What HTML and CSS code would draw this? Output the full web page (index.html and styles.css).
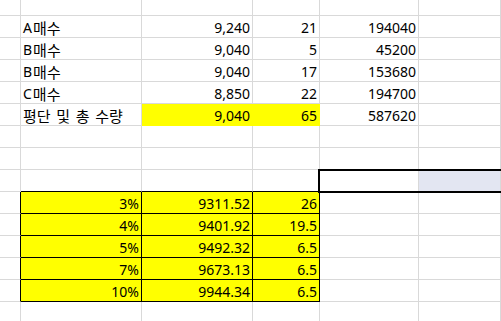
FILE: index.html
```html
<!DOCTYPE html>
<html lang="ko">
<head>
<meta charset="utf-8">
<title>Sheet</title>
<link rel="stylesheet" href="styles.css">
</head>
<body>
<div class="sheet">
  <div class="c top"></div><div class="c top"></div><div class="c top"></div><div class="c top"></div><div class="c top"></div><div class="c top"></div>

  <div class="c"></div><div class="c">A<span class="hg">매수</span></div><div class="c n">9,240</div><div class="c n">21</div><div class="c n">194040</div><div class="c"></div>
  <div class="c"></div><div class="c">B<span class="hg">매수</span></div><div class="c n">9,040</div><div class="c n">5</div><div class="c n">45200</div><div class="c"></div>
  <div class="c"></div><div class="c">B<span class="hg">매수</span></div><div class="c n">9,040</div><div class="c n">17</div><div class="c n">153680</div><div class="c"></div>
  <div class="c"></div><div class="c">C<span class="hg">매수</span></div><div class="c n">8,850</div><div class="c n">22</div><div class="c n">194700</div><div class="c"></div>
  <div class="c"></div><div class="c"><span class="hg ko">평단 및 총 수량</span></div><div class="c n hl">9,040</div><div class="c n hl">65</div><div class="c n">587620</div><div class="c"></div>

  <div class="c"></div><div class="c"></div><div class="c"></div><div class="c"></div><div class="c"></div><div class="c"></div>
  <div class="c"></div><div class="c"></div><div class="c"></div><div class="c"></div><div class="c"></div><div class="c"></div>
  <div class="c"></div><div class="c above"></div><div class="c above"></div><div class="c above"></div><div class="c active"><div class="selbox"></div></div><div class="c shade"></div>

  <div class="c edge"></div><div class="c n tb">3%</div><div class="c n tb">9311.52</div><div class="c n tb">26</div><div class="c"></div><div class="c"></div>
  <div class="c edge"></div><div class="c n tb">4%</div><div class="c n tb">9401.92</div><div class="c n tb">19.5</div><div class="c"></div><div class="c"></div>
  <div class="c edge"></div><div class="c n tb">5%</div><div class="c n tb">9492.32</div><div class="c n tb">6.5</div><div class="c"></div><div class="c"></div>
  <div class="c edge"></div><div class="c n tb">7%</div><div class="c n tb">9673.13</div><div class="c n tb">6.5</div><div class="c"></div><div class="c"></div>
  <div class="c edge"></div><div class="c n tb">10%</div><div class="c n tb">9944.34</div><div class="c n tb">6.5</div><div class="c"></div><div class="c"></div>

  <div class="c"></div><div class="c"></div><div class="c"></div><div class="c"></div><div class="c"></div><div class="c"></div>
</div>
</body>
</html>
```

FILE: styles.css
```css
html, body {
  margin: 0;
  padding: 0;
  background: #ffffff;
  overflow: hidden;
}

.sheet {
  display: grid;
  width: 501px;
  height: 321px;
  overflow: hidden;
  grid-template-columns: 21px 121px 111px 67px 99px minmax(0, 1fr);
  grid-template-rows: 16px repeat(14, 22px);
  font-family: "Noto Sans", "Noto Sans CJK KR", sans-serif;
  font-size: 14px;
  color: #000000;
}

.c {
  box-sizing: border-box;
  border-right: 1px solid #d9d9d9;
  border-bottom: 1px solid #d9d9d9;
  display: flex;
  align-items: flex-end;
  padding: 0 2px;
  line-height: 19px;
  white-space: nowrap;
  overflow: visible;
}

.n {
  justify-content: flex-end;
}

.hg {
  font-family: "Noto Sans CJK KR", sans-serif;
  font-size: 15px;
  line-height: 19px;
  margin-left: 1px;
}

.ko {
  margin-left: 0;
  word-spacing: 1.5px;
}

.hl {
  background: #ffff00;
  border-right-color: #ffff00;
  border-bottom-color: #ffff00;
}

.tb {
  background: #ffff00;
  border-right-color: #000000;
  border-bottom-color: #000000;
}

.edge {
  border-right-color: #000000;
}

.above {
  border-bottom-color: #000000;
}

.active {
  position: relative;
}

.selbox {
  position: absolute;
  left: -2px;
  top: -1px;
  width: 260px;
  height: 24px;
  box-sizing: border-box;
  border: 2px solid #000000;
}

.shade {
  background: #e3e6f2;
}
```
